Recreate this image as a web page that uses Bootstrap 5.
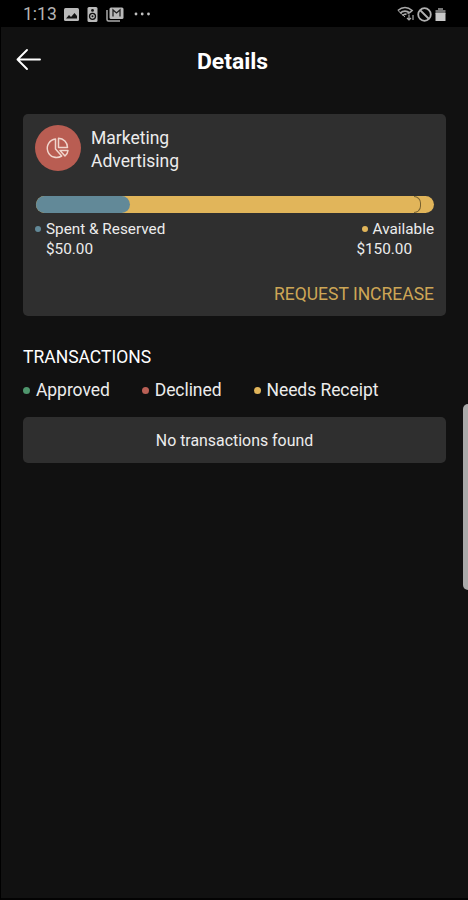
<!DOCTYPE html>
<html lang="en" data-bs-theme="dark">
<head>
<meta charset="utf-8">
<meta name="viewport" content="width=device-width, initial-scale=1">
<title>Details</title>
<link href="https://cdn.jsdelivr.net/npm/bootstrap@5.3.0/dist/css/bootstrap.min.css" rel="stylesheet">
<style>
  body { font-family: Roboto, sans-serif; background: #111; color: #ececec; height: 900px; overflow: hidden; line-height: 1; border-left: 1px solid #000; border-bottom: 2px solid #030303; }
  svg { display: block; flex: none; }
  .statusbar { height: 27px; background: #000; color: #b4b4b4; padding: 1px 22px 0 22px; }
  .clock { font-size: 17.5px; width: 33px; margin-right: 8px; padding-top: 2px; }
  .more { margin-left: 10px; }
  .blocked { margin-left: 2px; }
  .battery { margin: 0 0 0 3px; }
  .appbar { height: 68px; padding-right: 4px; }
  .back { left: 15px; top: 21px; }
  .title { font-size: 22.9px; font-weight: 700; color: #fff; padding-top: 2px; }
  .page { padding: 19px 22px 0; }
  .panel { background: #2f2f2f; border-radius: 5px; }
  .budget { height: 202px; padding: 11px 12px 0; }
  .disc { width: 46px; height: 46px; background: #b95d52; margin-left: -.5px; padding-right: 1px; }
  .names { font-size: 17.5px; line-height: 23px; margin: 2px 0 0 10.5px; }
  .meter { height: 17px; margin: 23px 0 0 1px; border-radius: 9px; background: #e1b55a; }
  .meter-spent { background: #628998; border-radius: 9px; }
  .meter-mark { width: 7px; border: 1px solid #76602f; border-left: 0; border-radius: 0 7px 7px 0; margin-right: 13px; }
  .figures { font-size: 15.3px; line-height: 20px; margin-top: 6px; }
  .amount { padding-left: 11px; }
  .amount-end { padding-right: 22px; }
  .dot { display: inline-block; flex: none; width: 7px; height: 7px; border-radius: 50%; }
  .dot-sm { width: 6px; height: 6px; margin-right: 5px; }
  .blue { background: #628998; } .gold { background: #e1b55a; } .green { background: #4f966d; } .red { background: #ba6056; }
  .request { font-size: 17.5px; color: #cda656; line-height: 20px; margin-top: 25px; }
  .heading { font-size: 17.5px; line-height: 20px; margin: 31px 0 0; font-weight: 400; }
  .legend { font-size: 17.5px; letter-spacing: -.06px; line-height: 20px; margin-top: 13px; }
  .legend-label { margin: 0 32px 0 6px; }
  .empty { height: 46px; font-size: 15.9px; margin-top: 17px; padding-top: 2px; }
  .edge { right: 0; top: 404px; width: 5px; height: 186px; background: #aaa; border-radius: 5px 0 0 5px; }
</style>
</head>
<body class="position-relative">
<div class="statusbar d-flex align-items-center">
  <span class="clock">1:13</span>
  <svg width="15" height="13" viewBox="0 0 15 13"><rect width="15" height="13" rx="1.5" fill="#b9b9b9"/><path d="M2 10.500 5 7l2 2 3.500-4 2.500 3v2.500z" fill="#111"/></svg>
  <svg class="ms-2" width="11" height="15" viewBox="0 0 11 15"><rect x=".5" width="10" height="15" rx="1.5" fill="#b9b9b9"/><circle cx="5.5" cy="3.4" r="1.4" fill="#111"/><circle cx="5.5" cy="9.3" r="3" fill="none" stroke="#111" stroke-width="1.3"/><circle cx="5.5" cy="9.3" r="1" fill="#111"/></svg>
  <svg class="ms-2" width="18" height="15" viewBox="0 0 18 15"><path d="M1 3v9.5Q1 14 2.500 14H14" fill="none" stroke="#aaa" stroke-width="1.5"/><rect x="3.500" y=".5" width="14" height="11.500" rx="1.500" fill="#b9b9b9"/><path d="M7 9.500V3l3.500 3L14 3v6.500" fill="none" stroke="#222" stroke-width="1.300"/></svg>
  <svg class="more" width="17" height="4" viewBox="0 0 17 4" fill="#c0c0c0"><circle cx="2" cy="2" r="1.400"/><circle cx="8.200" cy="2" r="1.400"/><circle cx="14.500" cy="2" r="1.400"/></svg>
  <svg class="ms-auto" width="18" height="16" viewBox="0 0 18 16" fill="none" stroke="#a9a9a9" stroke-width="1.600"><path d="M.8 4.500Q8 -1.500 15.200 4.500Q13 7 10.500 7.500M3 7.200Q8 3 13 7.200M5.500 9.500Q8 7.500 9.500 8.500"/><path d="M1 4.500 8 11" stroke-width="1"/><path d="M12 8.500v5.500m-2-2 2 2 2-2M16 14V9" stroke-width="1.200"/></svg>
  <svg class="blocked" width="15" height="15" viewBox="0 0 15 15" fill="none" stroke="#b0b0b0" stroke-width="1.800"><circle cx="7.500" cy="7.500" r="6.300"/><path d="m3 3 9 9"/></svg>
  <svg class="battery" width="11" height="15" viewBox="0 0 11 15"><path d="M3 1h5v2h2.500v4H.5V3H3z" fill="#777"/><path d="M.5 6h10v8H.5z" fill="#c8c8c8"/></svg>
</div>

<header class="appbar position-relative d-flex align-items-center justify-content-center">
  <svg class="back position-absolute" width="25" height="23" viewBox="0 0 25 23" fill="none" stroke="#fff" stroke-width="1.900" stroke-linecap="round" stroke-linejoin="round"><path d="M24 11.500H1.500M11 2 1.500 11.500 11 21"/></svg>
  <span class="title">Details</span>
</header>

<main class="page">
  <section class="panel budget">
    <div class="d-flex">
      <div class="disc rounded-circle d-flex align-items-center justify-content-center">
        <svg width="25" height="25" viewBox="0 0 25 25" fill="none" stroke="#f0d5cc" stroke-width="1.500" stroke-linejoin="round"><path d="M10.500 3a9.300 9.300 0 1 0 6.200 17L10.500 13z"/><path d="M13.500 2.200v9.300h9A9.300 9.300 0 0 0 13.500 2.200z"/><path d="M15 14.500h8a8 8 0 0 1-3 5.500z"/></svg>
      </div>
      <div class="names"><div>Marketing</div><div>Advertising</div></div>
    </div>
    <div class="meter d-flex justify-content-between">
      <div class="meter-spent" style="width:23.7%"></div>
      <div class="meter-mark"></div>
    </div>
    <div class="figures d-flex justify-content-between">
      <div>
        <div class="d-flex align-items-center"><span class="dot dot-sm blue"></span>Spent &amp; Reserved</div>
        <div class="amount">$50.00</div>
      </div>
      <div>
        <div class="d-flex align-items-center justify-content-end"><span class="dot dot-sm gold"></span>Available</div>
        <div class="amount-end">$150.00</div>
      </div>
    </div>
    <div class="request text-end">REQUEST INCREASE</div>
  </section>

  <h2 class="heading">TRANSACTIONS</h2>
  <div class="legend d-flex align-items-center">
    <span class="dot green"></span><span class="legend-label">Approved</span>
    <span class="dot red"></span><span class="legend-label">Declined</span>
    <span class="dot gold"></span><span class="legend-label me-0">Needs Receipt</span>
  </div>
  <div class="panel empty d-flex align-items-center justify-content-center">No transactions found</div>
</main>
<div class="edge position-absolute"></div>
<script src="https://cdn.jsdelivr.net/npm/bootstrap@5.3.0/dist/js/bootstrap.bundle.min.js"></script>
</body>
</html>
